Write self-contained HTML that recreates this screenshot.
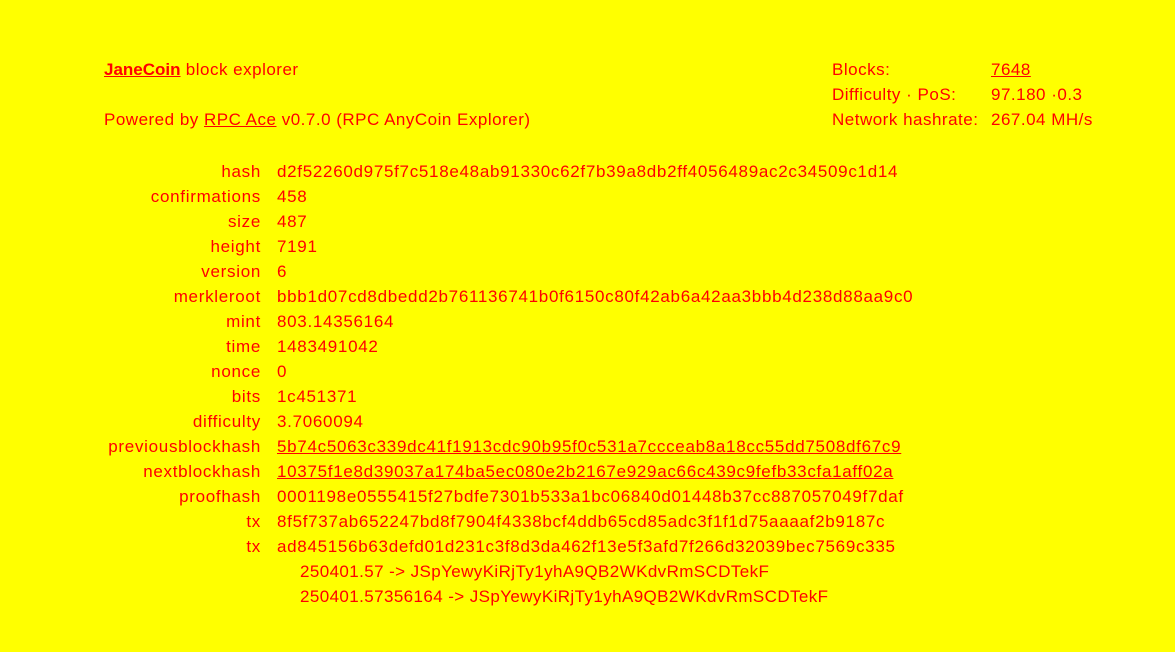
<!DOCTYPE html>
<html><head><meta charset="utf-8"><style>
body{margin:0;background:#ffff00;color:#ff0000;font-family:"Liberation Sans",sans-serif;font-size:17px;letter-spacing:0.7px;width:1175px;height:652px;overflow:hidden;position:relative}
a{color:#ff0000;text-decoration:underline}
.abs{position:absolute;line-height:25px;white-space:nowrap}
.row{position:absolute;left:0;width:1175px;height:25px;line-height:25px;white-space:nowrap}
.l{position:absolute;right:914px;text-align:right}
.v{position:absolute;left:277px}
</style></head><body>
<div class="abs" style="left:104px;top:57px;letter-spacing:0.5px"><a href="#"><b style="letter-spacing:0">JaneCoin</b></a> block explorer</div>
<div class="abs" style="left:104px;top:107px;letter-spacing:0.5px">Powered by <a href="#">RPC Ace</a> v0.7.0 (RPC AnyCoin Explorer)</div>
<div class="abs" style="left:832px;top:57px;letter-spacing:0.5px">Blocks:</div>
<div class="abs" style="left:991px;top:57px;letter-spacing:0.5px"><a href="#">7648</a></div>
<div class="abs" style="left:832px;top:82px;letter-spacing:0.5px">Difficulty · PoS:</div>
<div class="abs" style="left:991px;top:82px;letter-spacing:0.5px">97.180 ·0.3</div>
<div class="abs" style="left:832px;top:107px;letter-spacing:0.5px">Network hashrate:</div>
<div class="abs" style="left:991px;top:107px;letter-spacing:0.5px">267.04 MH/s</div>

<div class="row" style="top:159px"><span class="l">hash</span><span class="v">d2f52260d975f7c518e48ab91330c62f7b39a8db2ff4056489ac2c34509c1d14</span></div>
<div class="row" style="top:184px"><span class="l">confirmations</span><span class="v">458</span></div>
<div class="row" style="top:209px"><span class="l">size</span><span class="v">487</span></div>
<div class="row" style="top:234px"><span class="l">height</span><span class="v">7191</span></div>
<div class="row" style="top:259px"><span class="l">version</span><span class="v">6</span></div>
<div class="row" style="top:284px"><span class="l">merkleroot</span><span class="v">bbb1d07cd8dbedd2b761136741b0f6150c80f42ab6a42aa3bbb4d238d88aa9c0</span></div>
<div class="row" style="top:309px"><span class="l">mint</span><span class="v">803.14356164</span></div>
<div class="row" style="top:334px"><span class="l">time</span><span class="v">1483491042</span></div>
<div class="row" style="top:359px"><span class="l">nonce</span><span class="v">0</span></div>
<div class="row" style="top:384px"><span class="l">bits</span><span class="v">1c451371</span></div>
<div class="row" style="top:409px"><span class="l">difficulty</span><span class="v">3.7060094</span></div>
<div class="row" style="top:434px"><span class="l">previousblockhash</span><span class="v"><a href="#">5b74c5063c339dc41f1913cdc90b95f0c531a7ccceab8a18cc55dd7508df67c9</a></span></div>
<div class="row" style="top:459px"><span class="l">nextblockhash</span><span class="v"><a href="#">10375f1e8d39037a174ba5ec080e2b2167e929ac66c439c9fefb33cfa1aff02a</a></span></div>
<div class="row" style="top:484px"><span class="l">proofhash</span><span class="v">0001198e0555415f27bdfe7301b533a1bc06840d01448b37cc887057049f7daf</span></div>
<div class="row" style="top:509px"><span class="l">tx</span><span class="v">8f5f737ab652247bd8f7904f4338bcf4ddb65cd85adc3f1f1d75aaaaf2b9187c</span></div>
<div class="row" style="top:534px"><span class="l">tx</span><span class="v">ad845156b63defd01d231c3f8d3da462f13e5f3afd7f266d32039bec7569c335</span></div>
<div class="abs" style="left:300px;top:559px;letter-spacing:0.4px">250401.57 -&gt; JSpYewyKiRjTy1yhA9QB2WKdvRmSCDTekF</div>
<div class="abs" style="left:300px;top:584px;letter-spacing:0.4px">250401.57356164 -&gt; JSpYewyKiRjTy1yhA9QB2WKdvRmSCDTekF</div>
</body></html>
